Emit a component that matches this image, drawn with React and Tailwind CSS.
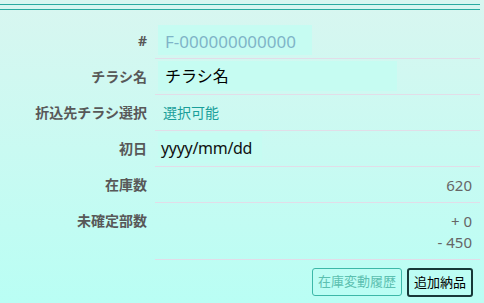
const font = { fontFamily: '"Noto Sans", "Noto Sans CJK JP", sans-serif' };

const Row = ({ label, children }) => (
  <div className="flex items-start">
    <div className="w-[155px] shrink-0 pr-2 text-right text-[14px] leading-[36px] font-bold text-[#585858]">
      {label}
    </div>
    <div className="flex-1 border-b border-[#e2dde8]">{children}</div>
  </div>
);

export default function App() {
  return (
    <div
      className="w-[484px] h-[303px] overflow-hidden bg-gradient-to-b from-[#d8f6f0] to-[#b9fef4] pt-[4px]"
      style={font}
    >
      <div className="h-[1px] mr-[4px] bg-[#2aaaa0]" />
      <div className="h-[4px]" />
      <div className="h-[1px] mr-[4px] bg-[#2aaaa0]" />

      <div className="pr-[4px] mt-[13px]">
        <Row label="#">
          <div className="h-[35px] pt-[2px]">
            <div className="ml-[3px] w-[154px] h-[30px] bg-[#c6fcf2] pl-[7px] pt-[6px] text-[17px] leading-[22px] text-[#7fb4c8]">
              F-000000000000
            </div>
          </div>
        </Row>
        <Row label="チラシ名">
          <div className="h-[35px] pt-[2px]">
            <div className="ml-[3px] w-[239px] h-[30px] bg-[#c6fcf2] pl-[7px] text-[16px] leading-[30px] text-black">
              チラシ名
            </div>
          </div>
        </Row>
        <Row label="折込先チラシ選択">
          <div className="h-[35px] pl-[8px] text-[14px] leading-[35px] text-[#1a9e9a]">
            選択可能
          </div>
        </Row>
        <Row label="初日">
          <div className="h-[35px] pt-[2px]">
            <div className="ml-[3px] w-[104px] h-[30px] bg-[#c6fcf2] pl-[3px] text-[16px] leading-[30px] tracking-[-0.3px] text-[#111]">
              yyyy/mm/dd
            </div>
          </div>
        </Row>
        <Row label="在庫数">
          <div className="h-[35px] pr-[8px] text-right text-[15px] leading-[36px] text-[#666]">
            620
          </div>
        </Row>
        <Row label="未確定部数">
          <div className="pt-[8px] pb-[6px] pr-[8px] text-right text-[15px] leading-[21px] text-[#666]">
            <div>+ 0</div>
            <div>- 450</div>
          </div>
        </Row>
        <div className="flex justify-end gap-[5px] pr-[7px] pt-[8px]">
          <button className="h-[28px] w-[90px] rounded-[3px] border border-[#3cb8a8] text-[13px] text-[#5cc0b0]">
            在庫変動履歴
          </button>
          <button className="h-[29px] w-[66px] rounded-[3px] border-2 border-[#173838] text-[13px] text-black">
            追加納品
          </button>
        </div>
      </div>
    </div>
  );
}
